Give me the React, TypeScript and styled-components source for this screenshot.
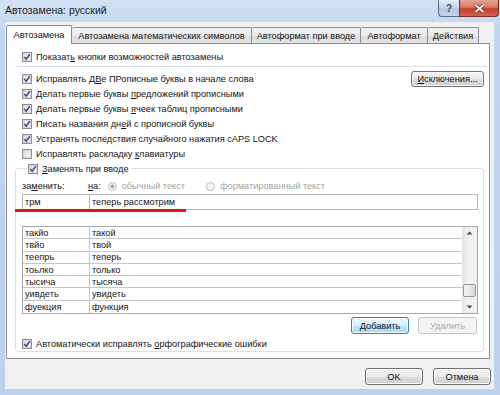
import React from 'react';
import styled, { createGlobalStyle, css } from 'styled-components';

const GlobalStyle = createGlobalStyle`
  html, body { margin: 0; padding: 0; }
  body {
    width: 500px;
    height: 395px;
    overflow: hidden;
    font-family: "Liberation Sans", Arial, sans-serif;
    font-size: 9.2px;
    color: #141414;
  }
`;

const Window = styled.div`
  width: 500px;
  height: 395px;
  box-sizing: border-box;
  padding: 0 1px 6px 5px;
  display: flex;
  flex-direction: column;
  background: linear-gradient(180deg, #d2e2f5 0%, #c1d6ef 30px, #bcd1ec 100%);
`;

const TitleBar = styled.div`
  height: 22px;
  display: flex;
  justify-content: space-between;
  align-items: flex-start;
`;

const TitleText = styled.div`
  font-size: 10.5px;
  line-height: 20px;
  color: #1b1b1b;
`;

const WinControls = styled.div`
  display: flex;
  height: 17px;
`;

const CaptionButton = styled.div<{ $w: number; $close?: boolean }>`
  width: ${p => p.$w}px;
  height: 17px;
  box-sizing: border-box;
  display: flex;
  align-items: center;
  justify-content: center;
  border: 1px solid #5a6b85;
  border-top: none;
  color: #fff;
  font-weight: bold;
  ${p => p.$close
    ? css`
      border-color: #7b2c25;
      border-radius: 0 0 4px 0;
      background: linear-gradient(180deg, #e6a596 0%, #d67766 45%, #c4402c 55%, #d3604c 100%);
    `
    : css`
      border-right: none;
      border-radius: 0 0 0 4px;
      background: linear-gradient(180deg, #e4edf8 0%, #c9d8ec 45%, #b2c5df 55%, #c5d6ec 100%);
      color: #3d4c66;
      font-size: 10px;
    `}
`;

const Client = styled.div`
  flex: 1;
  margin-right: 5px;
  padding: 3px 4px 0 1px;
  background: #f0f0f0;
  display: flex;
  flex-direction: column;
`;

const TabStrip = styled.div`
  display: flex;
  align-items: flex-end;
  height: 18px;
`;

const Tab = styled.div<{ $w: number; $active?: boolean }>`
  width: ${p => p.$w}px;
  box-sizing: border-box;
  display: flex;
  align-items: center;
  justify-content: center;
  white-space: nowrap;
  border: 1px solid #898c95;
  border-bottom: none;
  border-left: none;
  border-radius: 2px 2px 0 0;
  ${p => p.$active
    ? css`
      height: 19px;
      margin-bottom: -1px;
      padding-bottom: 1px;
      border-left: 1px solid #898c95;
      background: #fff;
      position: relative;
      z-index: 1;
    `
    : css`
      height: 16px;
      background: linear-gradient(180deg, #f3f3f3 0%, #ebebeb 50%, #dedede 51%, #e4e4e4 100%);
    `}
`;

const Panel = styled.div`
  width: 484px;
  height: 316px;
  box-sizing: border-box;
  border: 1px solid #898c95;
  background: #fff;
  padding: 5px 5px 0 8px;
  display: flex;
  flex-direction: column;
`;

const OptRow = styled.div<{ $h?: number }>`
  height: ${p => p.$h ?? 15}px;
  display: flex;
  align-items: center;
  gap: 4px;
  white-space: nowrap;
`;

const Indent = styled.div`
  padding-left: 7px;
`;

const Separator = styled.div`
  height: 1px;
  background: #d5dfe5;
  margin: 2px -3px 4px 2px;
`;

const Section = styled.div`
  display: flex;
  justify-content: space-between;
  align-items: flex-start;
  padding-left: 7px;
`;

const OptList = styled.div`
  display: flex;
  flex-direction: column;
`;

const PushButton = styled.div<{ $w: number; $h?: number; $kind?: 'default' | 'disabled' }>`
  width: ${p => p.$w}px;
  height: ${p => p.$h ?? 17}px;
  box-sizing: border-box;
  display: flex;
  align-items: center;
  justify-content: center;
  border: 1px solid #707070;
  border-radius: 3px;
  box-shadow: inset 0 0 0 1px #fbfbfb;
  background: linear-gradient(180deg, #f2f2f2 0%, #ebebeb 50%, #dddddd 51%, #cfcfcf 100%);
  color: #111;
  ${p => p.$kind === 'default' && css`
    border-color: #3c7fb1;
    box-shadow: inset 0 0 0 1px #f4fbfe;
    background: linear-gradient(180deg, #eaf6fd 0%, #d9f0fc 50%, #bee6fd 51%, #a7d9f5 100%);
  `}
  ${p => p.$kind === 'disabled' && css`
    border-color: #c2c5c7;
    box-shadow: none;
    background: #f4f4f4;
    color: #a8a8a8;
  `}
`;

const GroupBox = styled.div`
  margin-top: 7px;
  border: 1px solid #d5dfe5;
  border-radius: 3px;
  padding: 0 5px 0 6px;
  display: flex;
  flex-direction: column;
`;

const GroupTitle = styled(OptRow)`
  align-self: flex-start;
  margin: -8px 0 0 5px;
  padding: 0 2px 0 1px;
  background: #fff;
`;

const LabelsRow = styled.div`
  margin-top: 3px;
  height: 14px;
  display: flex;
  align-items: center;
  white-space: nowrap;
`;

const FieldLabel = styled.span<{ $w?: number }>`
  width: ${p => (p.$w ? `${p.$w}px` : 'auto')};
  flex-shrink: 0;
`;

const RadioOpt = styled.span<{ $ml: number }>`
  display: inline-flex;
  align-items: center;
  gap: 5px;
  margin-left: ${p => p.$ml}px;
  color: #a3a3a3;
`;

const InputRow = styled.div`
  position: relative;
  margin-top: 1px;
  height: 16px;
  box-sizing: border-box;
  display: flex;
  border: 1px solid #b4b7bd;
`;

const Cell = styled.div<{ $w?: number; $line?: string }>`
  ${p => (p.$w ? css`width: ${p.$w}px; flex-shrink: 0; border-right: 1px solid ${p.$line ?? '#b4b7bd'};` : css`flex: 1;`)}
  box-sizing: border-box;
  padding-left: 2px;
  display: flex;
  align-items: center;
  white-space: nowrap;
  overflow: hidden;
`;

const RedMark = styled.div`
  position: absolute;
  left: -8px;
  top: 14px;
  width: 171px;
  height: 3px;
  background: #e4141c;
`;

const List = styled.div`
  margin-top: 16px;
  height: 88px;
  box-sizing: border-box;
  border: 1px solid #a5a8ae;
  display: flex;
  overflow: hidden;
`;

const ListBody = styled.div`
  flex: 1;
  display: flex;
  flex-direction: column;
`;

const ListRow = styled.div`
  height: 12.3px;
  flex-shrink: 0;
  box-sizing: border-box;
  display: flex;
  border-bottom: 1px solid #c6c6c6;
  &:last-child { border-bottom: none; }
`;

const ScrollBar = styled.div`
  width: 15px;
  display: flex;
  flex-direction: column;
  align-items: center;
  background: linear-gradient(90deg, #e3e3e3 0%, #f1f1f1 40%, #f1f1f1 100%);
`;

const ScrollArrow = styled.div`
  height: 12px;
  width: 15px;
  display: flex;
  align-items: center;
  justify-content: center;
`;

const ScrollTrack = styled.div`
  flex: 1;
  width: 15px;
  display: flex;
  flex-direction: column;
  justify-content: flex-end;
  align-items: center;
  padding-bottom: 4px;
  box-sizing: border-box;
`;

const ScrollThumb = styled.div`
  width: 13px;
  height: 13px;
  box-sizing: border-box;
  border: 1px solid #979797;
  border-radius: 2px;
  background: linear-gradient(90deg, #f4f4f4 0%, #e8e8e8 50%, #d6d6d6 100%);
`;

const ButtonRow = styled.div`
  margin-top: 3px;
  display: flex;
  justify-content: flex-end;
  gap: 9px;
  padding-right: 1px;
`;

const BottomRow = styled(OptRow)`
  margin-top: 3px;
`;

const Footer = styled.div`
  margin: 9px -1px 0 0;
  display: flex;
  justify-content: flex-end;
  gap: 10px;
`;

const CheckBox: React.FC<{ checked?: boolean }> = ({ checked }) => (
  <svg width="10" height="10" viewBox="0 0 10 10" style={{ flexShrink: 0 }}>
    <defs>
      <linearGradient id="cbfill" x1="0" y1="0" x2="1" y2="1">
        <stop offset="0" stopColor="#d8d8d8" />
        <stop offset="1" stopColor="#fbfbfb" />
      </linearGradient>
    </defs>
    <rect x="0.5" y="0.5" width="9" height="9" fill="#f6f6f6" stroke="#8f8f8f" />
    <rect x="1.5" y="1.5" width="7" height="7" fill="url(#cbfill)" stroke="#c9c9c9" strokeWidth="0.6" />
    {checked && (
      <path d="M2.3 5.1 L4.2 7.3 L7.8 2.2" fill="none" stroke="#37508c" strokeWidth="1.5" />
    )}
  </svg>
);

const Radio: React.FC<{ checked?: boolean }> = ({ checked }) => (
  <svg width="9" height="9" viewBox="0 0 9 9" style={{ flexShrink: 0 }}>
    <circle cx="4.5" cy="4.5" r="4" fill="#f3f3f3" stroke="#bcbcbc" />
    {checked && <circle cx="4.5" cy="4.5" r="2" fill="#a9a9a9" />}
  </svg>
);

const Arrow: React.FC<{ down?: boolean }> = ({ down }) => (
  <svg width="7" height="4" viewBox="0 0 7 4">
    <path d={down ? 'M0.5 0.5 L6.5 0.5 L3.5 3.5 Z' : 'M0.5 3.5 L6.5 3.5 L3.5 0.5 Z'} fill="#4d4d4d" />
  </svg>
);

const options: { text: React.ReactNode; checked: boolean }[] = [
  { text: <>Исправлять Д<u>В</u>е ПРописные буквы в начале слова</>, checked: true },
  { text: <>Делать первые буквы <u>п</u>редложений прописными</>, checked: true },
  { text: <>Делать первые буквы <u>я</u>чеек таблиц прописными</>, checked: true },
  { text: <>Писать названия дн<u>е</u>й с прописной буквы</>, checked: true },
  { text: <>Устранять после<u>д</u>ствия случайного нажатия cAPS LOCK</>, checked: true },
  { text: <>Исправлять раскладку <u>к</u>лавиатуры</>, checked: false },
];

const entries = [
  ['такйо', 'такой'],
  ['твйо', 'твой'],
  ['теепрь', 'теперь'],
  ['тоьлко', 'только'],
  ['тысича', 'тысяча'],
  ['уивдеть', 'увидеть'],
  ['фуекция', 'функция'],
];

const tabs = [
  { label: 'Автозамена', w: 66 },
  { label: 'Автозамена математических символов', w: 180 },
  { label: 'Автоформат при вводе', w: 109 },
  { label: 'Автоформат', w: 67 },
  { label: 'Действия', w: 51 },
];

const App: React.FC = () => {
  return (
    <>
      <GlobalStyle />
      <Window>
        <TitleBar>
          <TitleText>Автозамена: русский</TitleText>
          <WinControls>
            <CaptionButton $w={21}>?</CaptionButton>
            <CaptionButton $w={40} $close>
              <svg width="11" height="9" viewBox="0 0 11 9">
                <path d="M1.5 1 L9.5 8 M9.5 1 L1.5 8" stroke="#5a1d17" strokeWidth="3.2" />
                <path d="M1.5 1 L9.5 8 M9.5 1 L1.5 8" stroke="#ffffff" strokeWidth="1.8" />
              </svg>
            </CaptionButton>
          </WinControls>
        </TitleBar>

        <Client>
          <TabStrip>
            {tabs.map((t, i) => (
              <Tab key={t.label} $w={t.w} $active={i === 0}>{t.label}</Tab>
            ))}
          </TabStrip>

          <Panel>
            <Indent>
              <OptRow>
                <CheckBox checked />
                <span>Показат<u>ь</u> кнопки возможностей автозамены</span>
              </OptRow>
            </Indent>
            <Separator />

            <Section>
              <OptList>
                {options.map((o, i) => (
                  <OptRow key={i}>
                    <CheckBox checked={o.checked} />
                    <span>{o.text}</span>
                  </OptRow>
                ))}
              </OptList>
              <PushButton $w={73} $h={16}><span><u>И</u>сключения...</span></PushButton>
            </Section>

            <GroupBox>
              <GroupTitle>
                <CheckBox checked />
                <span><u>З</u>аменять при вводе</span>
              </GroupTitle>

              <LabelsRow>
                <FieldLabel $w={66}>за<u>м</u>енить:</FieldLabel>
                <FieldLabel><u>н</u>а:</FieldLabel>
                <RadioOpt $ml={7}><Radio checked />обычный текст</RadioOpt>
                <RadioOpt $ml={21}><Radio />форматированный текст</RadioOpt>
              </LabelsRow>

              <InputRow>
                <Cell $w={67}>трм</Cell>
                <Cell>теперь рассмотрим</Cell>
                <RedMark />
              </InputRow>

              <List>
                <ListBody>
                  {entries.map(([from, to]) => (
                    <ListRow key={from}>
                      <Cell $w={67} $line="#c6c6c6">{from}</Cell>
                      <Cell>{to}</Cell>
                    </ListRow>
                  ))}
                </ListBody>
                <ScrollBar>
                  <ScrollArrow><Arrow /></ScrollArrow>
                  <ScrollTrack>
                    <ScrollThumb />
                  </ScrollTrack>
                  <ScrollArrow><Arrow down /></ScrollArrow>
                </ScrollBar>
              </List>

              <ButtonRow>
                <PushButton $w={58} $kind="default"><span><u>Д</u>обавить</span></PushButton>
                <PushButton $w={59} $kind="disabled">Удалить</PushButton>
              </ButtonRow>

              <BottomRow $h={14}>
                <CheckBox checked />
                <span>Автоматически исправлять <u>о</u>рфографические ошибки</span>
              </BottomRow>
            </GroupBox>
          </Panel>

          <Footer>
            <PushButton $w={58}>OK</PushButton>
            <PushButton $w={58}>Отмена</PushButton>
          </Footer>
        </Client>
      </Window>
    </>
  );
};

export default App;
